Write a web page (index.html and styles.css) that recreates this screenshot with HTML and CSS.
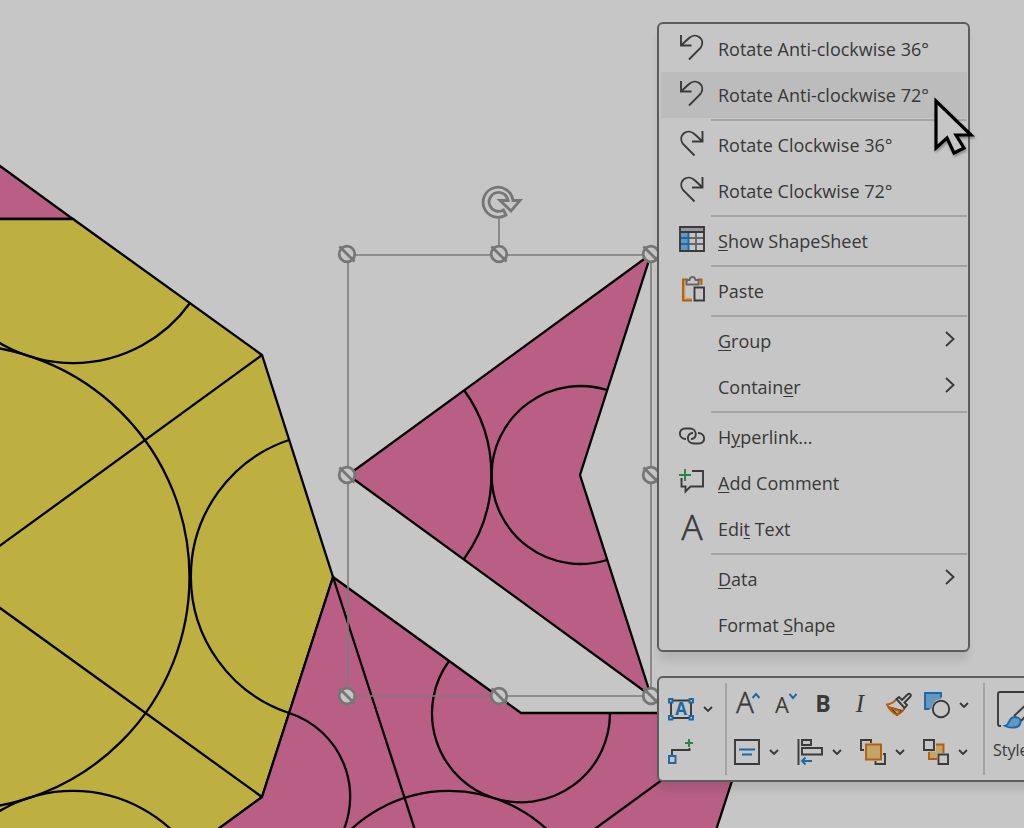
FILE: index.html
```html
<!DOCTYPE html>
<html lang="en">
<head>
  <meta charset="UTF-8">
  <meta name="viewport" content="width=device-width, initial-scale=1.0">
  <title>Penrose Tiles</title>
  <link rel="stylesheet" href="styles.css">
</head>
<body>
  <main class="page">
    <svg class="drawing" viewBox="0 0 1024 828" preserveAspectRatio="xMinYMin slice" role="img" aria-label="Penrose tiles drawing">
      <defs>
        <g id="handle">
          <circle r="7.8" />
          <path d="M-7.5 -7.5L7.5 7.5" />
        </g>
      </defs>

      <!-- tiles -->
      <path class="pink" d="M-40 137L73 219H-40z" />
      <path class="yellow" d="M-40 219H73L262 355L333 577L262 797L73 935H-40z" />
      <path class="pink" d="M333 577L521 713H754L682 935H73L262 797z" />

      <!-- tile edges and arcs -->
      <g class="lines">
        <path d="M262 355L-43 577L262 797M333 577L449 935L754 713" />
        <circle cx="-43" cy="577" r="232.5" />
        <path d="M190 303A144 144 0 0 1 -44 303" />
        <path d="M289 440A144 144 0 0 0 289 713A88 88 0 0 1 333 849" />
        <path d="M-44 851A144 144 0 0 1 190 851" />
        <path d="M449 661A89 89 0 1 0 610 713" />
        <path d="M332 851A144 144 0 0 1 566 851" />
      </g>

      <!-- selected dart -->
      <path class="pink" d="M651 254L348 475L651 696L580 475z" />
      <g class="lines">
        <path d="M464 390A144 144 0 0 1 464 559" />
        <path d="M607 390A89 89 0 1 0 607 560" />
      </g>

      <!-- selection box -->
      <path class="select-box" d="M348 255H651V696H348zM499 255V217" />
      <g class="handles">
        <use href="#handle" x="347" y="254" />
        <use href="#handle" x="499" y="254" />
        <use href="#handle" x="651" y="254" />
        <use href="#handle" x="347" y="475" />
        <use href="#handle" x="651" y="475" />
        <use href="#handle" x="347" y="696" />
        <use href="#handle" x="499" y="696" />
        <use href="#handle" x="651" y="696" />
      </g>
      <path class="rotate-handle" d="M513 200.5A15 15 0 1 0 506 215L503.500 210A9.500 9.500 0 1 1 508 200.500H500L511 211L520 200.500z" />
    </svg>

    <div class="context-menu" role="menu">
      <button class="menu-item" role="menuitem">
        <svg class="icon" viewBox="0 0 26 26"><path d="M2 1V11.500H12.500M2.500 11L9.500 4.500C17 -3 27.500 5.500 21.500 14L10 25.500" /></svg>
        <span>Rotate Anti-clockwise 36°</span>
      </button>
      <button class="menu-item active" role="menuitem">
        <svg class="icon" viewBox="0 0 26 26"><path d="M2 1V11.500H12.500M2.500 11L9.500 4.500C17 -3 27.500 5.500 21.500 14L10 25.500" /></svg>
        <span>Rotate Anti-clockwise 72°</span>
      </button>
      <hr>
      <button class="menu-item" role="menuitem">
        <svg class="icon" viewBox="0 0 26 26"><path d="M23.500 1V11.500H13M23 11L16 4.500C8.500 -3 -2 5.500 4 14L15.500 25.500" /></svg>
        <span>Rotate Clockwise 36°</span>
      </button>
      <button class="menu-item" role="menuitem">
        <svg class="icon" viewBox="0 0 26 26"><path d="M23.500 1V11.500H13M23 11L16 4.500C8.500 -3 -2 5.500 4 14L15.500 25.500" /></svg>
        <span>Rotate Clockwise 72°</span>
      </button>
      <hr>
      <button class="menu-item" role="menuitem">
        <svg class="icon" viewBox="0 0 26 26">
          <path class="grey-fill" d="M1 1H25V6H1z" />
          <path class="blue-fill" d="M1 6H9.500V25H1z" />
          <path class="grey-line" d="M17 6V25M9.500 12H25M9.500 18H25" />
          <path class="blue-line" d="M1 12H9.500M1 18H9.500M9.500 6V25" />
          <path d="M1 1H25V25H1zM1 6H25" />
        </svg>
        <span><u>S</u>how ShapeSheet</span>
      </button>
      <hr>
      <button class="menu-item" role="menuitem">
        <svg class="icon" viewBox="0 0 26 26">
          <path class="orange-pale" d="M9 5H5.500V23H13M19 5H21V9" />
          <path class="orange-line" d="M9 3.500H4V24.500H13M19 3.500H22.500V9" />
          <path class="grey-line" d="M7.500 8.500V4H10.500C11 0 16 0 16.500 4H19.500V8.500z" />
          <path d="M15.500 11.500H25V24.500H15.500z" />
        </svg>
        <span>Paste</span>
      </button>
      <hr>
      <button class="menu-item" role="menuitem">
        <span class="icon"></span>
        <span><u>G</u>roup</span>
        <svg class="arrow" viewBox="0 0 10 16"><path d="M1 1L8.500 8L1 15" /></svg>
      </button>
      <button class="menu-item" role="menuitem">
        <span class="icon"></span>
        <span>Contain<u>e</u>r</span>
        <svg class="arrow" viewBox="0 0 10 16"><path d="M1 1L8.500 8L1 15" /></svg>
      </button>
      <hr>
      <button class="menu-item" role="menuitem">
        <svg class="icon" viewBox="0 0 26 26"><path d="M7 17C-1 17 -1 6.500 6 6.500H11C18 6.500 19 17 12 17M19 11C27 11 27 21.500 20 21.500H15C7 21.500 7 11 14 11" /></svg>
        <span>H<u>y</u>perlink...</span>
      </button>
      <button class="menu-item" role="menuitem">
        <svg class="icon" viewBox="0 0 26 26">
          <path d="M13 3H24V18.500H11.500L6.500 23.500V18.500H2.500V10" />
          <path class="green-line" d="M6 1V13M0 7H12" />
        </svg>
        <span><u>A</u>dd Comment</span>
      </button>
      <button class="menu-item" role="menuitem">
        <svg class="icon" viewBox="0 0 26 26"><text class="letter large" x="13" y="26">A</text></svg>
        <span>Edi<u>t</u> Text</span>
      </button>
      <hr>
      <button class="menu-item" role="menuitem">
        <span class="icon"></span>
        <span><u>D</u>ata</span>
        <svg class="arrow" viewBox="0 0 10 16"><path d="M1 1L8.500 8L1 15" /></svg>
      </button>
      <button class="menu-item" role="menuitem">
        <span class="icon"></span>
        <span>Format <u>S</u>hape</span>
      </button>
    </div>

    <div class="mini-toolbar" role="toolbar">
      <div class="insert-tools">
        <button class="tool" aria-label="Text box">
          <svg class="icon" viewBox="0 0 26 26">
            <path d="M3 4.500H23V22H3z" />
            <path class="blue-line box" d="M1 3H4.500V6.500H1zM21.500 3H25V6.500H21.500zM1 20H4.500V23.500H1zM21.500 20H25V23.500H21.500z" />
            <text class="letter bold-blue" x="13" y="19">A</text>
          </svg>
          <svg class="chevron" viewBox="0 0 10 6"><path d="M1 1L5 5L9 1" /></svg>
        </button>
        <button class="tool" aria-label="Connector">
          <svg class="icon" viewBox="0 0 26 26">
            <path d="M4 18V12H21.500V10" />
            <path class="blue-line" d="M1 18H7.500V25H1z" />
            <path class="green-line" d="M21 1V9M17 5H25" />
          </svg>
        </button>
      </div>
      <div class="format-tools">
        <div class="tool-row">
          <button class="tool" aria-label="Increase font size">
            <svg class="icon" viewBox="0 0 26 26">
              <text class="letter medium" x="11" y="21">A</text>
              <path class="blue-line" d="M18.500 6L22 2L25.500 6" />
            </svg>
          </button>
          <button class="tool" aria-label="Decrease font size">
            <svg class="icon" viewBox="0 0 26 26">
              <text class="letter small" x="10" y="21">A</text>
              <path class="blue-line" d="M17.500 2L21 6L24.500 2" />
            </svg>
          </button>
          <button class="tool" aria-label="Bold">
            <svg class="icon" viewBox="0 0 26 26"><text class="letter bold" x="13" y="20">B</text></svg>
          </button>
          <button class="tool" aria-label="Italic">
            <svg class="icon" viewBox="0 0 26 26"><text class="letter italic" x="12" y="20">I</text></svg>
          </button>
          <button class="tool" aria-label="Format painter">
            <svg class="icon" viewBox="0 0 26 26">
              <path class="orange-fill" d="M5 16L16 19L11 23z" />
              <path class="orange-line" d="M10.500 7C8 10.500 5 12 1 12.500C3 17 6.500 20.500 11 23C14.500 21 17 19 18.500 16M3.500 15.500L14 19" />
              <path class="box" d="M10.500 7L13 5L16 8L21.500 2.500C23.500 0.500 26 3 24 5L18.500 10.500L21 13L18.500 16z" />
            </svg>
          </button>
          <button class="tool" aria-label="Change shape">
            <svg class="icon" viewBox="0 0 26 26">
              <path class="blue-fill" d="M1 1H17V7C12 7 8 11 7.500 17H1z" />
              <path class="blue-line" d="M5.500 17H1V1H17V5.500" />
              <circle cx="17" cy="17" r="8.200" />
            </svg>
            <svg class="chevron" viewBox="0 0 10 6"><path d="M1 1L5 5L9 1" /></svg>
          </button>
        </div>
        <div class="tool-row wide">
          <button class="tool" aria-label="Align text">
            <svg class="icon" viewBox="0 0 26 26">
              <path d="M1 1H25V25H1z" />
              <path class="blue-line" d="M5 10.500H21M8 15.500H18" />
            </svg>
            <svg class="chevron" viewBox="0 0 10 6"><path d="M1 1L5 5L9 1" /></svg>
          </button>
          <button class="tool" aria-label="Align shapes">
            <svg class="icon" viewBox="0 0 26 26">
              <path d="M1.500 0V26M5 1H14V6H5zM5 9H25V15.500H5z" />
              <path class="blue-line" d="M15 22H5M8.500 18.500L5 22L8.500 25.500" />
            </svg>
            <svg class="chevron" viewBox="0 0 10 6"><path d="M1 1L5 5L9 1" /></svg>
          </button>
          <button class="tool" aria-label="Bring to front">
            <svg class="icon" viewBox="0 0 26 26">
              <path d="M4 11H1V1H11V4M15.500 22V25H25V15H23" />
              <path class="orange-fill orange-line" d="M6 5.500H21V20.500H6z" />
            </svg>
            <svg class="chevron" viewBox="0 0 10 6"><path d="M1 1L5 5L9 1" /></svg>
          </button>
          <button class="tool" aria-label="Group shapes">
            <svg class="icon" viewBox="0 0 26 26">
              <path class="orange-fill flat" d="M13 5.500H20.500V14H14V20H6V12.500H13z" />
              <path class="orange-line" d="M13 5.500H20.500V14M6 13V20H14" />
              <path class="box" d="M1 1H11V11H1zM15.500 15.500H25V25H15.500z" />
            </svg>
            <svg class="chevron" viewBox="0 0 10 6"><path d="M1 1L5 5L9 1" /></svg>
          </button>
        </div>
      </div>
      <button class="styles-button">
        <svg class="styles-icon" viewBox="0 0 38 38">
          <path d="M4 35H3Q1 35 1 33V3Q1 1 3 1H33Q35 1 35 3V12" />
          <path d="M17 25L32 11M24 30L37 16" />
          <path class="blue-fill" d="M8 35C13 34 11 26 18 26C27 27 24 36 17 36.500C13 37 10 36 8 35z" />
          <path class="blue-line" d="M8 35C13 34 11 26 18 26C27 27 24 36 17 36.500C13 37 10 36 8 35z" />
        </svg>
        <span>Styles</span>
      </button>
    </div>

    <svg class="pointer" viewBox="0 0 46 64" aria-hidden="true">
      <path d="M4 6V53L15 43L22 58L32 53L24 40H39z" />
    </svg>
  </main>
</body>
</html>
```
FILE: styles.css
```css
body {
  margin: 0;
  font-family: "Open Sans", "Noto Sans", sans-serif;
  color: #383838;
  background-color: #c6c6c6;
}

.page {
  position: relative;
  height: 100vh;
  overflow: hidden;
}

/* icons */
svg {
  fill: none;
  stroke: #3a3a3a;
  stroke-width: 1.9;
}

.icon {
  flex: none;
  width: 26px;
  height: 26px;
  overflow: visible;
}

.chevron {
  width: 10px;
  height: 6px;
}

.blue-line {
  stroke: #1a69a6;
}

.blue-fill {
  fill: #6497c0;
  stroke: none;
}

.green-line {
  stroke: #2a8045;
}

.grey-line {
  stroke: #666;
}

.grey-fill {
  fill: #979797;
  stroke: none;
}

.orange-fill {
  fill: #c0a468;
}

.flat {
  stroke: none;
}

.orange-line {
  stroke: #b65c0c;
}

.orange-pale {
  stroke: #c0a468;
}

.box {
  fill: #c6c6c6;
}

.letter {
  fill: #3a3a3a;
  stroke: none;
  text-anchor: middle;
}

.large,
.medium {
  font-weight: 300;
  stroke: #3a3a3a;
  stroke-width: 0.6;
}

.large {
  font-size: 35px;
}

.medium {
  font-size: 29px;
}

.small {
  font-size: 22px;
}

.bold {
  font-size: 23px;
  font-weight: 700;
}

.italic {
  font-family: "Liberation Serif", serif;
  font-size: 25px;
  font-style: italic;
}

.bold-blue {
  fill: #1a69a6;
  font-size: 17px;
  font-weight: 700;
}

/* drawing */
.drawing {
  display: block;
  width: 100%;
  height: 100%;
}

.pink,
.yellow {
  stroke: #000;
  stroke-width: 2.3;
}

.pink {
  fill: #b95f85;
}

.yellow {
  fill: #beb040;
}

.lines {
  fill: none;
  stroke: #000;
  stroke-width: 2.3;
}

.select-box {
  fill: none;
  stroke: #7c7c7c;
  stroke-width: 1.6;
}

.handles,
.rotate-handle {
  fill: #c6c6c6;
  stroke: #767676;
  stroke-width: 2.8;
}

/* context menu */
.context-menu {
  position: absolute;
  top: 22px;
  left: 657px;
  display: flex;
  flex-direction: column;
  box-sizing: border-box;
  width: 313px;
  padding: 2px 1px 2px 2px;
  border: 2px solid #5c5c5c;
  border-radius: 6px;
  background-color: #c6c6c6;
  box-shadow: 0 10px 8px -2px rgba(0, 0, 0, 0.1);
}

.context-menu hr {
  width: 256px;
  height: 2px;
  margin: 1px 0 1px auto;
  border: none;
  background-color: #a4a4a4;
}

button {
  padding: 0;
  border: none;
  background: none;
  color: inherit;
  font-family: inherit;
  cursor: pointer;
}

.menu-item {
  display: flex;
  align-items: center;
  gap: 13px;
  height: 46px;
  padding: 0 12px 0 18px;
  font-size: 18px;
  line-height: 24px;
  white-space: nowrap;
}

.menu-item .icon,
.menu-item .arrow {
  margin-bottom: 4px;
}

.menu-item.active {
  background-color: #bcbcbc;
}

.menu-item u {
  text-decoration-thickness: 1px;
  text-underline-offset: 2px;
}

.arrow {
  width: 10px;
  height: 16px;
  margin-left: auto;
}

/* mini toolbar */
.mini-toolbar {
  position: absolute;
  top: 676px;
  left: 657px;
  right: -40px;
  display: flex;
  box-sizing: border-box;
  padding: 5px 0 5px 9px;
  border: 2px solid #5c5c5c;
  border-radius: 6px;
  background-color: #c6c6c6;
  box-shadow: 0 10px 8px -2px rgba(0, 0, 0, 0.1);
}

.tool {
  display: flex;
  align-items: center;
  gap: 9px;
}

.insert-tools,
.format-tools {
  display: flex;
  flex-direction: column;
  justify-content: space-between;
  border-right: 2px solid #a4a4a4;
}

.insert-tools {
  padding: 13px 12px 11px 0;
}

.format-tools {
  padding: 9px 14px 10px 7px;
  gap: 21px;
}

.tool-row {
  display: flex;
  gap: 12px;
}

.tool-row.wide {
  gap: 18px;
}

.styles-button {
  display: flex;
  flex-direction: column;
  align-items: flex-start;
  gap: 10px;
  padding: 8px 0 0 8px;
  font-size: 16px;
  line-height: 22px;
}

.styles-icon {
  width: 38px;
  height: 38px;
  margin-left: 4px;
}

.pointer {
  position: absolute;
  top: 95px;
  left: 932px;
  width: 46px;
  height: 64px;
  fill: #c6c6c6;
  stroke: #000;
  stroke-width: 3.2;
  filter: drop-shadow(1px 2px 1px rgba(0, 0, 0, 0.3));
}
```
